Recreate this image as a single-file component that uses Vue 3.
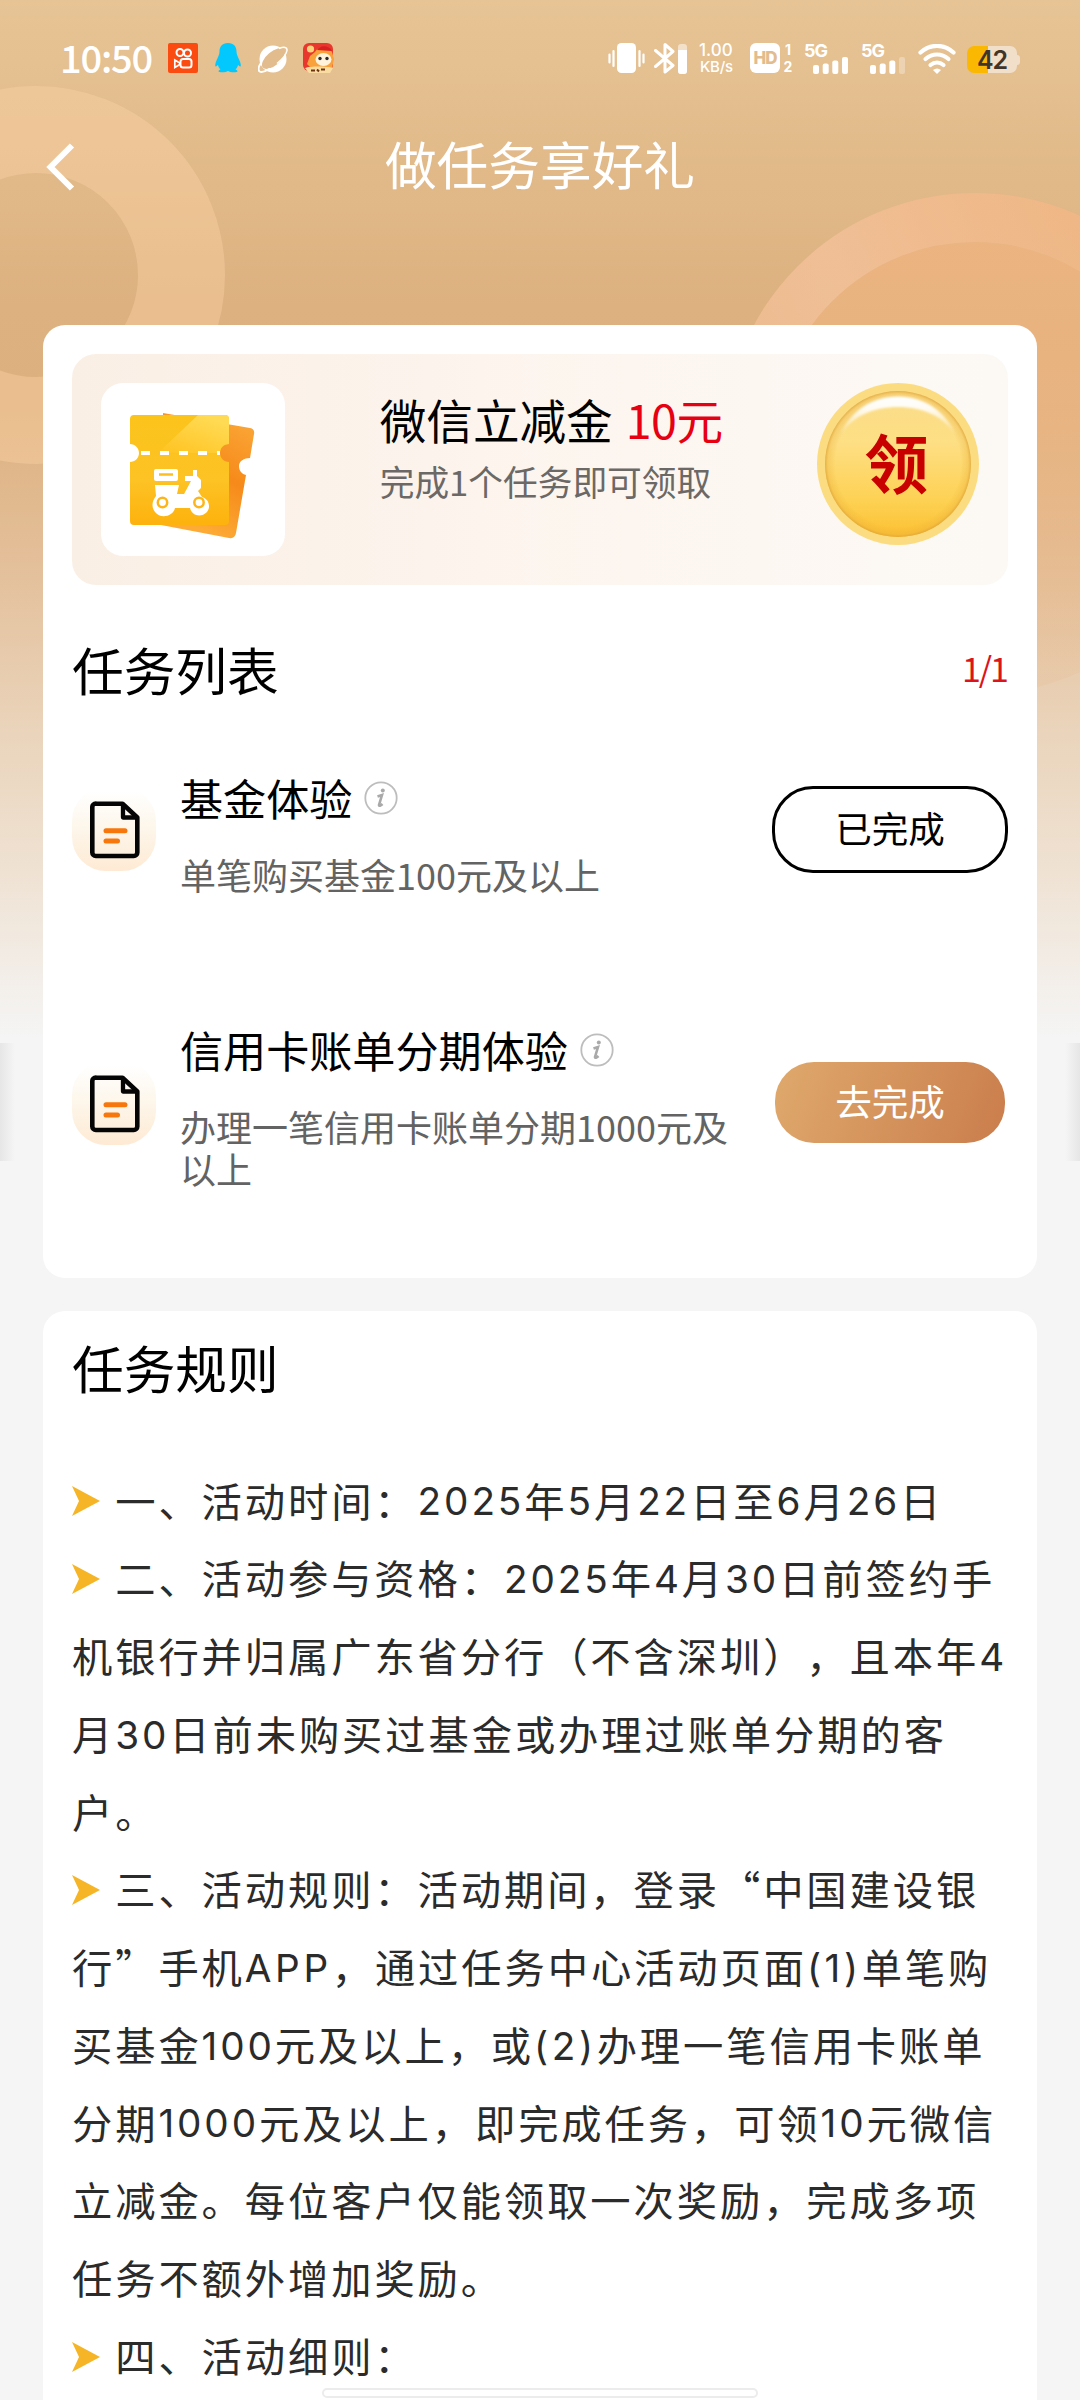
<script setup>
const tasks = [
  { title: '基金体验', desc: '单笔购买基金100元及以上', done: true },
  { title: '信用卡账单分期体验', desc: '办理一笔信用卡账单分期1000元及以上', done: false },
]

const lines = [
  { mark: true, text: '一、活动时间：2025年5月22日至6月26日' },
  { mark: true, text: '二、活动参与资格：2025年4月30日前签约手' },
  { text: '机银行并归属广东省分行（不含深圳），且本年4' },
  { text: '月30日前未购买过基金或办理过账单分期的客' },
  { text: '户。' },
  { mark: true, text: '三、活动规则：活动期间，登录“中国建设银' },
  { text: '行”手机APP，通过任务中心活动页面(1)单笔购' },
  { text: '买基金100元及以上，或(2)办理一笔信用卡账单' },
  { text: '分期1000元及以上，即完成任务，可领10元微信' },
  { text: '立减金。每位客户仅能领取一次奖励，完成多项' },
  { text: '任务不额外增加奖励。' },
  { mark: true, text: '四、活动细则：' },
].map((l) => ({
  ...l,
  parts: l.text
    .split(/([0-9]+|[A-Z]+|\([0-9]\))/)
    .filter(Boolean)
    .map((t) => ({
      t,
      latin: /^[0-9A-Z()]+$/.test(t),
      wide: /^[A-Z(]/.test(t),
    })),
}))
</script>

<template>
  <div class="page">
    <svg class="backdrop" width="1080" height="1180" viewBox="0 0 1080 1180">
      <defs>
        <linearGradient id="bg" x1="0" y1="0" x2="0" y2="1">
          <stop offset="0" stop-color="#e7c495" />
          <stop offset=".26" stop-color="#ddb180" />
          <stop offset=".34" stop-color="#ddb17f" />
          <stop offset=".47" stop-color="#e3be98" />
          <stop offset=".62" stop-color="#ead4bb" />
          <stop offset=".74" stop-color="#efe2d3" />
          <stop offset=".88" stop-color="#f5f5f5" />
          <stop offset="1" stop-color="#f5f5f5" />
        </linearGradient>
        <linearGradient id="fadeA" x1="0" y1="0" x2="0" y2="1">
          <stop offset="0" stop-color="#edb480" stop-opacity=".9" />
          <stop offset=".3" stop-color="#eab37f" stop-opacity=".9" />
          <stop offset=".6" stop-color="#e9b685" stop-opacity=".7" />
          <stop offset=".85" stop-color="#e7bb90" stop-opacity=".4" />
          <stop offset="1" stop-color="#e6c09a" stop-opacity=".25" />
        </linearGradient>
        <linearGradient id="ringA" x1=".9" y1="0" x2=".1" y2=".35">
          <stop offset="0" stop-color="#f3b682" stop-opacity=".5" />
          <stop offset=".8" stop-color="#f3c6a4" stop-opacity=".6" />
          <stop offset="1" stop-color="#f3c6a4" stop-opacity=".5" />
        </linearGradient>
        <linearGradient id="edgeL" x1="0" x2="1">
          <stop offset="0" stop-color="#e6e6e6" />
          <stop offset="1" stop-color="#f5f5f5" />
        </linearGradient>
        <linearGradient id="edgeR" x1="1" x2="0">
          <stop offset="0" stop-color="#e6e6e6" />
          <stop offset="1" stop-color="#f5f5f5" />
        </linearGradient>
        <clipPath id="upper"><rect x="700" y="180" width="380" height="200" /></clipPath>
      </defs>
      <rect width="1080" height="1180" fill="url(#bg)" />
      <circle cx="36" cy="275" r="145.500" fill="none" stroke="#ffd5a8" stroke-opacity=".38" stroke-width="87" />
      <circle cx="975" cy="444" r="251" fill="url(#fadeA)" />
      <circle cx="975" cy="444" r="226.500" fill="none" stroke="url(#ringA)" stroke-width="49" clip-path="url(#upper)" />
      <rect x="0" y="1043" width="15" height="118" fill="url(#edgeL)" />
      <rect x="1065" y="1043" width="15" height="118" fill="url(#edgeR)" />
    </svg>

    <header class="status">
      <span class="clock">10:50</span>
      <svg class="s1" width="30" height="30" viewBox="0 0 30 30">
        <rect width="30" height="30" rx="2" fill="#fb4b10" />
        <g fill="none" stroke="#fff" stroke-width="2">
          <circle cx="12" cy="9.500" r="3.500" />
          <circle cx="19.500" cy="10" r="3.500" />
          <rect x="12.500" y="16" width="11" height="8.600" rx="2.500" />
          <path d="M6.800 17l5 3v1.500l-5 3z" stroke-width="1.700" />
        </g>
      </svg>
      <svg class="s2" width="26" height="30" viewBox="0 0 26 30">
        <path d="M13 0C7 0 4.500 4 4.500 8.500c0 3-1.500 5.500-3 9S0 23 .5 23.500c.7.500 2-1.500 2.500-1.500.3 1.800 1.200 3.300 2.500 4.500-1 .4-2 1-2 1.800C3.500 29.600 11 29.600 13 28c2 1.600 9.500 1.600 9.500.3 0-.8-1-1.400-2-1.800 1.300-1.200 2.200-2.700 2.500-4.500.5 0 1.800 2 2.500 1.500.5-.5.500-2.500-1-6s-3-6-3-9C21.500 4 19 0 13 0z" fill="#02c8fd" />
      </svg>
      <svg class="s3" width="30" height="28" viewBox="0 0 30 28">
        <circle cx="15" cy="14" r="13.500" fill="#fff" />
        <ellipse cx="15.500" cy="13.500" rx="14" ry="6.800" transform="rotate(-40 15.500 13.500)" fill="#e2bc8d" />
        <path d="M21 3.500C26 1.600 29.500 2 29 5.500 28.500 9 24.500 14 19 18.500" fill="none" stroke="#fff" stroke-width="1.500" />
        <path d="M12 23.500C8 26 3.500 27.500 1.700 26.500-.2 25 .6 21.500 3 18" fill="none" stroke="#fff" stroke-width="2" />
      </svg>
      <svg class="s4" width="32" height="30" viewBox="0 0 32 30">
        <rect width="30" height="28" rx="6" fill="#e8382d" />
        <path d="M12 9c4-7 13-6 17 0l2 7-2 9H8l-4-4 3-8z" fill="#f9a13a" />
        <path d="M14 7c3-5 12-5 15 1z" fill="#d81f22" />
        <circle cx="7.500" cy="6" r="3.600" fill="#fbd17c" />
        <ellipse cx="20.500" cy="16.500" rx="8" ry="6.500" fill="#fff3dc" />
        <circle cx="17" cy="15.500" r="1.700" fill="#2d2a2a" />
        <circle cx="24" cy="15.500" r="1.700" fill="#2d2a2a" />
        <path d="M2 25c5-2 22-2 28 0l-3 5H6z" fill="#fbdca0" />
        <path d="M8 27.500h4m2-1l2 2m2-2h4" stroke="#6b3314" stroke-width="2" />
      </svg>

      <svg class="r1" width="37" height="30" viewBox="0 0 37 30">
        <rect x="9" width="19" height="30" rx="4.500" fill="#fff" />
        <path d="M5.500 8v15M1.500 11.500v8M31.500 8v15M35.500 11.500v8" stroke="#fff" stroke-width="2.200" stroke-linecap="round" />
      </svg>
      <svg class="r2" width="33" height="31" viewBox="0 0 33 31">
        <path d="M1.500 7.500L19 22.500l-8 6.500V1.500l8 7L1.500 23.500" fill="none" stroke="#fff" stroke-width="3" stroke-linejoin="round" stroke-linecap="round" />
        <rect x="24" y="1" width="9" height="30" rx="3" fill="#fff" fill-opacity=".5" />
        <path d="M24 7h9v21a3 3 0 0 1-3 3h-3a3 3 0 0 1-3-3z" fill="#fff" />
      </svg>
      <span class="speed"><b>1.00</b><i>KB/s</i></span>
      <span class="hd">HD</span>
      <span class="sims"><b>1</b><b>2</b></span>
      <span class="net">
        <b>5G</b>
        <svg width="35" height="17" viewBox="0 0 35 17" fill="#fff">
          <rect y="8" width="6" height="9" rx="2" /><rect x="9.700" y="6.500" width="6" height="10.500" rx="2" />
          <rect x="19.300" y="3.500" width="6" height="13.500" rx="2" /><rect x="29" width="6" height="17" rx="2" />
        </svg>
      </span>
      <span class="net second">
        <b>5G</b>
        <svg width="35" height="17" viewBox="0 0 35 17" fill="#fff">
          <rect y="8" width="6" height="9" rx="2" /><rect x="9.700" y="6.500" width="6" height="10.500" rx="2" />
          <rect x="19.300" y="3.500" width="6" height="13.500" rx="2" /><rect x="29" width="6" height="17" rx="2" opacity=".3" />
        </svg>
      </span>
      <svg class="wifi" width="38" height="30" viewBox="0 0 38 30">
        <g fill="none" stroke="#fff" stroke-width="4.200" stroke-linecap="round">
          <path d="M2.500 8.500C12-.3 26-.3 35.500 8.500" />
          <path d="M7.500 15c7-6 16-6 23 0" />
          <path d="M12.500 21c4-3.300 9-3.300 13 0" />
        </g>
        <path d="M15 26c2.500-2 5.500-2 8 0L19 30z" fill="#fff" />
      </svg>
      <span class="battery"><em>42</em></span>
      <span class="nub"></span>
    </header>

    <nav class="nav">
      <svg class="back" width="32" height="48" viewBox="0 0 32 48">
        <path d="M28 2.500L6.500 24 28 45.500" fill="none" stroke="#fff" stroke-width="6" />
      </svg>
      <h1>做任务享好礼</h1>
    </nav>

    <section class="card main">
      <div class="banner">
        <div class="thumb">
          <svg width="184" height="173" viewBox="101 383 184 173">
            <defs>
              <linearGradient id="tf" x1="0" y1="0" x2="0" y2="1">
                <stop offset="0" stop-color="#fbc41b" /><stop offset=".6" stop-color="#fdc224" /><stop offset="1" stop-color="#fdb20d" />
              </linearGradient>
              <linearGradient id="ts" x1="0" y1="1" x2=".7" y2="0">
                <stop offset="0" stop-color="#ffc21f" /><stop offset="1" stop-color="#ffdb55" />
              </linearGradient>
              <linearGradient id="tb" x1="1" y1="0" x2=".6" y2="1">
                <stop offset="0" stop-color="#fbab3c" /><stop offset=".55" stop-color="#f68a1a" /><stop offset="1" stop-color="#fdab35" />
              </linearGradient>
            </defs>
            <path d="M163 413l87 15q5 1 4 6l-4 24c-6 0-11 3-11 8s3 8 7 9l-10 58q-1 6-7 5l-68-13z" fill="url(#tb)" />
            <path d="M134 415h91q4 0 4 4v25c-5 0-9 4-9 9s4 9 9 9v59q0 4-4 4h-91q-4 0-4-4v-59c5 0 9-4 9-9s-4-9-9-9v-25q0-4 4-4z" fill="url(#tf)" />
            <path d="M198 415h27q4 0 4 4v25c-5 0-9 3-9 9h-62z" fill="url(#ts)" />
            <path d="M141 453h79" stroke="#fff" stroke-width="4" stroke-dasharray="9 10" />
            <path d="M156 469h20q2 0 2 2v8q0 2-2 2h-20q-2 0-2-2v-8q0-2 2-2zM155 485h24l-2 9h7l7-13h-6v-5h8v-6h4v6l4 4v8l-3 3 4 6c7 2 9 10 5 15-6 6-15 4-17-4h-15c-2 9-15 11-20 4-4-5-3-11 1-16z" fill="#fff" />
            <path d="M159 474.500h14" stroke="#fdbf20" stroke-width="2.500" />
            <circle cx="162.500" cy="502.500" r="4.700" fill="#fff" stroke="#fdb51a" stroke-width="2.500" />
            <circle cx="199" cy="502.500" r="4.700" fill="#fff" stroke="#fdb51a" stroke-width="2.500" />
          </svg>
        </div>
        <div class="reward">
          <p class="name">微信立减金<span>10元</span></p>
          <p class="hint">完成1个任务即可领取</p>
        </div>
        <svg class="coin" width="162" height="162" viewBox="0 0 162 162">
          <defs>
            <linearGradient id="face" x1="0" y1="0" x2="0" y2="1">
              <stop offset="0" stop-color="#fbdc8a" /><stop offset=".35" stop-color="#fddf84" />
              <stop offset=".75" stop-color="#fdd153" /><stop offset="1" stop-color="#fcc032" />
            </linearGradient>
            <linearGradient id="shine" x1="0" y1="0" x2="0" y2="1">
              <stop offset="0" stop-color="#fff" /><stop offset=".3" stop-color="#fff" stop-opacity=".9" />
              <stop offset="1" stop-color="#fff" stop-opacity="0" />
            </linearGradient>
            <radialGradient id="rim">
              <stop offset=".86" stop-color="#e8a82c" stop-opacity="0" />
              <stop offset=".96" stop-color="#e8ab38" stop-opacity=".3" />
              <stop offset="1" stop-color="#dca236" stop-opacity=".75" />
            </radialGradient>
            <filter id="soft"><feGaussianBlur stdDeviation="1.200" /></filter>
          </defs>
          <circle cx="81" cy="81" r="81" fill="#fcdc80" />
          <circle cx="81" cy="81" r="73" fill="url(#face)" />
          <circle cx="81" cy="81" r="73" fill="url(#rim)" />
          <path d="M22 54C33 28 55 13.500 81 13.500S129 28 140 54C127 33 106 24 81 24S35 33 22 54z" fill="url(#shine)" filter="url(#soft)" />
          <text x="79.500" y="105" text-anchor="middle">领</text>
        </svg>
      </div>

      <div class="head"><h2>任务列表</h2><span class="count">1/1</span></div>

      <div v-for="(t, i) in tasks" :key="i" class="task" :class="{ tall: !t.done }">
        <div class="doc">
          <svg width="84" height="84" viewBox="0 0 84 84">
            <path d="M24 16.800h26.500L65.300 30.500v35a3.500 3.500 0 0 1-3.500 3.500H23.800a3.500 3.500 0 0 1-3.500-3.500V20a3.500 3.500 0 0 1 3.500-3.500z" fill="none" stroke="#050505" stroke-width="4.600" stroke-linejoin="round" />
            <path d="M51 17v13.500h14" fill="none" stroke="#050505" stroke-width="4.300" stroke-linejoin="round" />
            <path d="M34 43.700h19M34 54h11.500" stroke="#f7770c" stroke-width="5" stroke-linecap="round" />
          </svg>
        </div>
        <div class="info">
          <div class="title">
            {{ t.title }}
            <svg width="34" height="34" viewBox="0 0 34 34">
              <circle cx="17" cy="17" r="15.700" fill="none" stroke="#bdbdbd" stroke-width="1.800" />
              <circle cx="18.800" cy="9.500" r="2" fill="#a9a9a9" />
              <path d="M13.500 15.500l4.500-1.500-3 10q.3 2 3.500-1" fill="none" stroke="#a9a9a9" stroke-width="2.600" />
            </svg>
          </div>
          <p class="desc">{{ t.desc }}</p>
        </div>
        <button :class="t.done ? 'done' : 'go'">{{ t.done ? '已完成' : '去完成' }}</button>
      </div>
    </section>

    <section class="card rules">
      <h2>任务规则</h2>
      <div class="body">
        <div v-for="(l, i) in lines" :key="i" class="line">
          <svg v-if="l.mark" width="28" height="30" viewBox="0 0 28 30"><path d="M0 0l28 15L0 30l7-15z" fill="#f6b526" /></svg>
          <span v-for="(p, j) in l.parts" :key="j" :class="{ latin: p.latin, wide: p.wide }">{{ p.t }}</span>
        </div>
      </div>
    </section>
    <div class="home"></div>
  </div>
</template>

<style>
body { margin: 0; background: #f5f5f5; }
</style>

<style scoped>
* { box-sizing: border-box; }
h1, h2, p { margin: 0; font-weight: 400; }
.page {
  position: relative;
  width: 1080px;
  height: 2400px;
  overflow: hidden;
  background: #f5f5f5;
  font-family: "Noto Sans CJK SC", sans-serif;
  color: #000;
  text-spacing-trim: space-all;
}
.backdrop { position: absolute; left: 0; top: 0; display: block; }
.status {
  position: relative;
  display: flex;
  align-items: flex-start;
  height: 116px;
  padding: 43px 0 0 60px;
  color: #fff;
}
.status svg { display: block; flex: none; }
.clock { width: 94px; font: 500 38px/30px "Noto Sans CJK SC", sans-serif; letter-spacing: -1.200px; margin-top: -1px; }
.s1 { margin-left: 14px; }
.s2 { margin-left: 17px; }
.s3 { margin: 2px 0 0 17px; }
.s4 { margin-left: 15px; }
.r1 { margin-left: 273px; }
.r2 { margin-left: 9px; }
.speed { display: flex; flex-direction: column; width: 38px; margin-left: 12px; }
.speed b, .speed i { font: 500 17px/15px Inter, sans-serif; white-space: nowrap; }
.speed i { font-size: 15px; line-height: 18px; letter-spacing: -0.200px; padding-left: 1px; }
.hd {
  width: 30px; height: 30px; margin-left: 13px; border-radius: 6px; background: #fff;
  color: #e2bc8d; font: 800 17px/31px Inter, sans-serif; text-align: center; letter-spacing: -1px;
}
.sims { display: flex; flex-direction: column; width: 10px; margin: -2px 0 0 3px; align-items: center; }
.sims b { font: 700 14px/17px Inter, sans-serif; }
.net { position: relative; width: 45px; height: 31px; margin-left: 11px; }
.net b { position: absolute; left: 0; top: 0; font: 700 18px/15px Inter, sans-serif; letter-spacing: -1px; }
.net svg { margin: 14px 0 0 9px; }
.second { margin-left: 12px; }
.wifi { margin: 1px 0 0 12px; }
.battery {
  width: 50px; height: 27px; margin: 3px 0 0 11px; border-radius: 7px;
  background: linear-gradient(90deg, #fbb803 21px, #f2dfca 21px);
  text-align: center;
}
.battery em { font: 600 25px/29px Inter, sans-serif; color: #40352a; letter-spacing: -1px; }
.nub { width: 3px; height: 10px; margin-top: 12px; border-radius: 0 3px 3px 0; background: #f2dfca; }

.nav { position: relative; display: flex; height: 209px; padding: 27px 44px 0; }
.nav h1 { flex: 1; margin-right: 32px; text-align: center; color: #fff; font-size: 51.700px; line-height: 40px; }

.card { position: relative; width: 994px; margin: 0 43px; background: #fff; border-radius: 22px; padding: 0 29px; }
.main { height: 953px; padding-top: 29px; }
.banner {
  display: flex; width: 936px; height: 231px; padding: 29px; border-radius: 24px;
  background: linear-gradient(90deg, #faefe5, #fdf6f0 60%, #fcf9f5);
}
.thumb { width: 184px; height: 173px; background: #fff; border-radius: 22px; overflow: hidden; }
.reward { width: 438px; margin-left: 95px; }
.name { font-size: 46.600px; line-height: 56px; margin-top: 8px; white-space: nowrap; }
.name span { color: #e60012; margin-left: 13px; letter-spacing: -0.500px; }
.hint { font-size: 34.700px; line-height: 40px; margin-top: 14px; color: #6b6866; white-space: nowrap; }
.coin { display: block; flex: none; }
.coin text { fill: #c80000; font-weight: 700; font-size: 64px; }

.head { display: flex; justify-content: space-between; width: 936px; height: 202px; padding-top: 56px; }
h2 { font-size: 51.700px; line-height: 56px; }
.count { color: #dc141c; font-size: 34px; line-height: 54px; letter-spacing: -2px; padding-right: 1px; }

.task { display: flex; width: 936px; height: 275px; }
.doc { width: 84px; height: 84px; border-radius: 34px; background: linear-gradient(#fff 5%, #fdf6ea 50%, #feead4); }
.info { width: 560px; margin-left: 24px; }
.title { display: flex; align-items: center; font-size: 43.100px; line-height: 48px; height: 48px; margin-top: -14px; gap: 12px; }
.title svg { margin-top: 1px; }
.desc { font-size: 36px; line-height: 41.500px; margin-top: 33px; color: #636363; }
button {
  font: 36.600px/76px "Noto Sans CJK SC", sans-serif; text-align: center; padding: 0 0 3px; margin: -1px 0 0 auto;
  width: 236px; height: 87px; border: 3px solid #000; border-radius: 41px; background: #fff; color: #000;
}
.go {
  width: 230px; height: 81px; margin: 0 3px 0 auto; border: 0; border-radius: 39px; color: #fff;
  background: linear-gradient(110deg, #dfa96c, #ca7d4c);
}
.tall .doc { margin-top: -1px; }
.tall .info { margin-top: -23px; }

.rules { margin-top: 33px; height: 1150px; padding-top: 28px; }
.body { margin-top: 66px; font-size: 40.300px; color: #2b2b2b; }
.line { height: 77.760px; line-height: 76.500px; letter-spacing: 2.900px; white-space: nowrap; display: flex; align-items: center; }
.line svg { margin: 3px 15.200px 0 0; flex: none; }
.latin { font-family: Inter, sans-serif; font-size: 38.700px; line-height: 70px; padding-top: 3px; }
.wide { letter-spacing: 3.600px; }
.home {
  position: absolute; left: 322px; top: 2388px; width: 436px; height: 10px;
  border: 2px solid #ececec; border-radius: 5px; background: #fff;
}
</style>
